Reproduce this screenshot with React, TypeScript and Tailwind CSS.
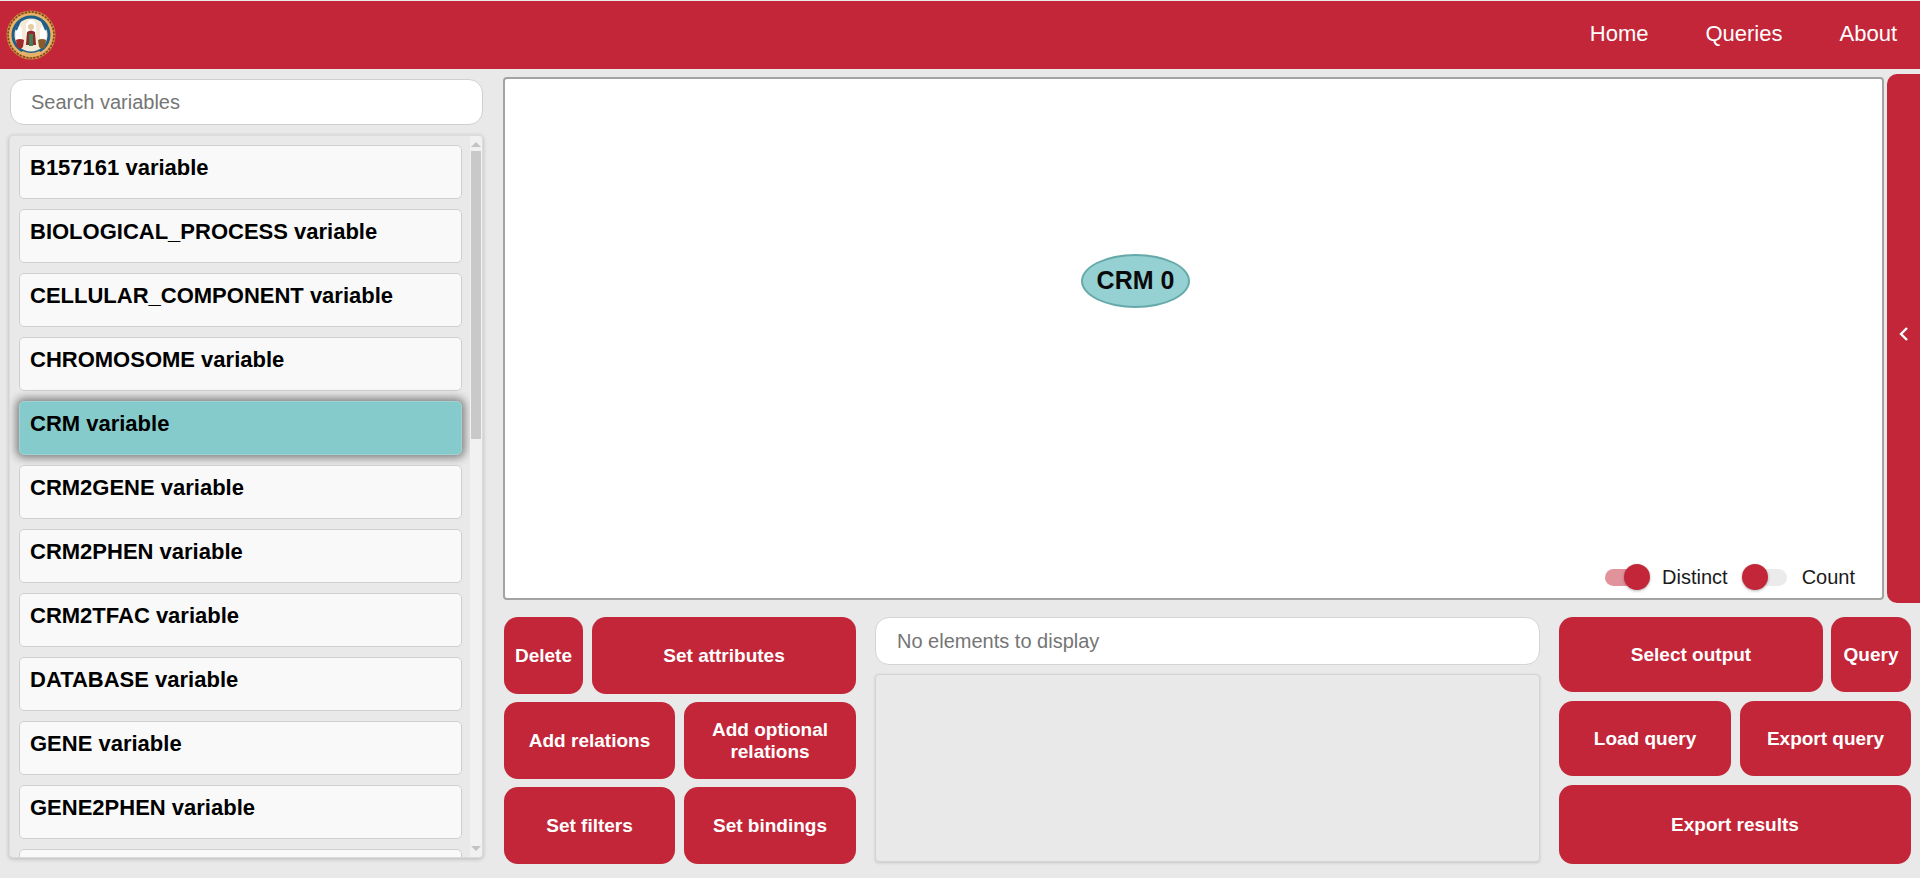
import React from "react";

const variables = [
  "B157161 variable",
  "BIOLOGICAL_PROCESS variable",
  "CELLULAR_COMPONENT variable",
  "CHROMOSOME variable",
  "CRM variable",
  "CRM2GENE variable",
  "CRM2PHEN variable",
  "CRM2TFAC variable",
  "DATABASE variable",
  "GENE variable",
  "GENE2PHEN variable",
  "",
];

function Logo() {
  return (
    <svg width="50" height="50" viewBox="0 0 50 50" className="block">
      <circle cx="25" cy="25" r="24.5" fill="#d88a3a" />
      <circle cx="25" cy="25" r="22" fill="#e8b26a" />
      <circle cx="25" cy="25" r="19.5" fill="#1f5f86" />
      <circle cx="25" cy="25" r="23" fill="none" stroke="#6b4a2a" strokeWidth="1.6" strokeDasharray="2 1.5" />
      <circle cx="25" cy="25" r="16.5" fill="#f3ead8" />
      <path d="M10 29 L10 19 Q13 12 16 19 L16 29 Z" fill="#fff" />
      <path d="M20 26 L20 14 Q25 6 30 14 L30 26 Z" fill="#fff" />
      <path d="M34 29 L34 19 Q37 12 40 19 L40 29 Z" fill="#fff" />
      <path d="M14 11 L10 20 M36 11 L40 20" stroke="#1f5f86" strokeWidth="2" />
      <circle cx="25" cy="17" r="3" fill="#e9c9a0" />
      <path d="M20 35 L21 22 Q25 19 29 22 L30 35 Z" fill="#8e2a2a" />
      <path d="M23 36 L23 24 L27 24 L27 36 Z" fill="#3f7f55" />
      <path d="M10 30 Q14 28 18 30 L17 37 Q14 40 11 37 Z" fill="#a32a2a" />
      <path d="M32 30 Q36 28 40 30 L39 37 Q36 40 33 37 Z" fill="#8a5a2a" />
      <path d="M16 42 Q25 46 34 42" fill="none" stroke="#e8b26a" strokeWidth="2" />
    </svg>
  );
}

function Btn({ className, children }: { className: string; children: React.ReactNode }) {
  return (
    <button className={`flex items-center justify-center rounded-[14px] bg-[#c22638] text-center text-[19px] leading-[22px] font-bold text-white ${className}`}>
      {children}
    </button>
  );
}

function Toggle({ on }: { on: boolean }) {
  return (
    <div className={`flex h-[26px] w-[42px] items-center ${on ? "" : ""}`}>
      <div className={`flex h-[17px] w-[42px] items-center rounded-full ${on ? "justify-end bg-[#e0939b]" : "justify-start bg-[#ebebeb]"}`}>
        <div className={`h-[26px] w-[26px] shrink-0 rounded-full bg-[#c22638] shadow-[0_1px_3px_rgba(0,0,0,0.3)] ${on ? "-mr-[3px]" : "-ml-[3px]"}`} />
      </div>
    </div>
  );
}

export default function App() {
  return (
    <div className="h-[878px] w-[1920px] overflow-hidden bg-[#e9e9e9] pt-px font-['Liberation_Sans',Arial,sans-serif] text-black">
      <header className="flex h-[68px] items-center justify-between bg-[#c22638] pr-[23px] pl-[6px]">
        <Logo />
        <nav className="-mt-[4px] flex gap-[57px] text-[22px] text-white">
          <span>Home</span>
          <span>Queries</span>
          <span>About</span>
        </nav>
      </header>

      <main className="flex pl-[9px]">
        <aside className="w-[474px] shrink-0 pt-[10px]">
          <div className="ml-px flex h-[46px] w-[473px] items-center rounded-[14px] border border-[#cfcfcf] bg-white pl-[20px] text-[20px] text-[#757575]">
            Search variables
          </div>
          <div className="mt-[10px] flex h-[723px] overflow-hidden rounded-[4px] border border-[#dcdcdc] bg-[#e9e9e9] shadow-[0_1px_4px_rgba(0,0,0,0.22)]">
            <div className="flex w-[460px] shrink-0 flex-col gap-[10px] pt-[9px] pl-[9px]">
              {variables.map((v, i) => (
                <div
                  key={i}
                  className={`h-[54px] w-[443px] shrink-0 rounded-[5px] border pt-[9px] pl-[10px] text-[22px] leading-[26px] font-bold ${
                    v === "CRM variable"
                      ? "border-[#9fd3d3] bg-[#85cbcb] shadow-[0_0_9px_3px_rgba(0,0,0,0.45)]"
                      : "border-[#cfcfcf] bg-[#f9f9f9]"
                  }`}
                >
                  {v}
                </div>
              ))}
            </div>
            <div className="flex flex-1 flex-col items-center bg-[#f1f1f1] pt-[6px]">
              <div className="h-0 w-0 border-x-[5px] border-b-[5px] border-x-transparent border-b-[#c4c4c4]" />
              <div className="mt-[4px] h-[288px] w-[10px] bg-[#c9c9c9]" />
              <div className="mt-auto mb-[6px] h-0 w-0 border-x-[5px] border-t-[5px] border-x-transparent border-t-[#c4c4c4]" />
            </div>
          </div>
        </aside>

        <section className="ml-[20px] w-[1417px] shrink-0">
          <div className="flex items-start">
            <div className="relative mt-[8px] h-[523px] w-[1381px] shrink-0 rounded-[4px] border-2 border-[#a3a3a3] bg-white">
              <div className="absolute top-[175px] left-[576px] flex h-[54px] w-[109px] items-center justify-center rounded-[50%] border-[2.5px] border-[#66a9a9] bg-[#95d0d2] text-[25px] font-bold text-[#0a0a0a]">
                CRM 0
              </div>
              <div className="absolute right-[27px] bottom-[1px] flex h-[40px] items-center text-[20px] text-[#1a1a1a]">
                <Toggle on />
                <span className="ml-[15px]">Distinct</span>
                <div className="ml-[17px]"><Toggle on={false} /></div>
                <span className="ml-[15px]">Count</span>
              </div>
            </div>
            <div className="mt-[5px] ml-[3px] flex h-[529px] w-[33px] shrink-0 items-center justify-center rounded-l-[10px] bg-[#c22638] pb-[10px]">
              <svg width="14" height="16" viewBox="0 0 14 16" fill="none" stroke="#fff" strokeWidth="2.4">
                <path d="M10 2 L4 8 L10 14" />
              </svg>
            </div>
          </div>

          <div className="mt-[14px] flex items-start">
            <div className="ml-px flex w-[352px] shrink-0 flex-col gap-[8px]">
              <div className="flex h-[77px] gap-[9px]">
                <Btn className="w-[79px]">Delete</Btn>
                <Btn className="w-[264px]">Set attributes</Btn>
              </div>
              <div className="flex h-[77px] gap-[9px]">
                <Btn className="w-[171px]">Add relations</Btn>
                <Btn className="w-[172px]">Add optional<br />relations</Btn>
              </div>
              <div className="flex h-[77px] gap-[9px]">
                <Btn className="w-[171px]">Set filters</Btn>
                <Btn className="w-[172px]">Set bindings</Btn>
              </div>
            </div>

            <div className="ml-[19px] w-[665px] shrink-0">
              <div className="flex h-[48px] items-center rounded-[14px] border border-[#d4d4d4] bg-white pl-[21px] text-[20px] text-[#757575]">
                No elements to display
              </div>
              <div className="mt-[9px] h-[188px] rounded-[4px] border border-[#d4d4d4] bg-[#e9e9e9] shadow-[0_1px_3px_rgba(0,0,0,0.15)]" />
            </div>

            <div className="ml-[19px] flex w-[352px] shrink-0 flex-col gap-[9px]">
              <div className="flex h-[75px] gap-[8px]">
                <Btn className="w-[264px]">Select output</Btn>
                <Btn className="w-[80px]">Query</Btn>
              </div>
              <div className="flex h-[75px] gap-[9px]">
                <Btn className="w-[172px]">Load query</Btn>
                <Btn className="w-[171px]">Export query</Btn>
              </div>
              <Btn className="h-[79px] w-[352px]">Export results</Btn>
            </div>
          </div>
        </section>
      </main>
    </div>
  );
}
